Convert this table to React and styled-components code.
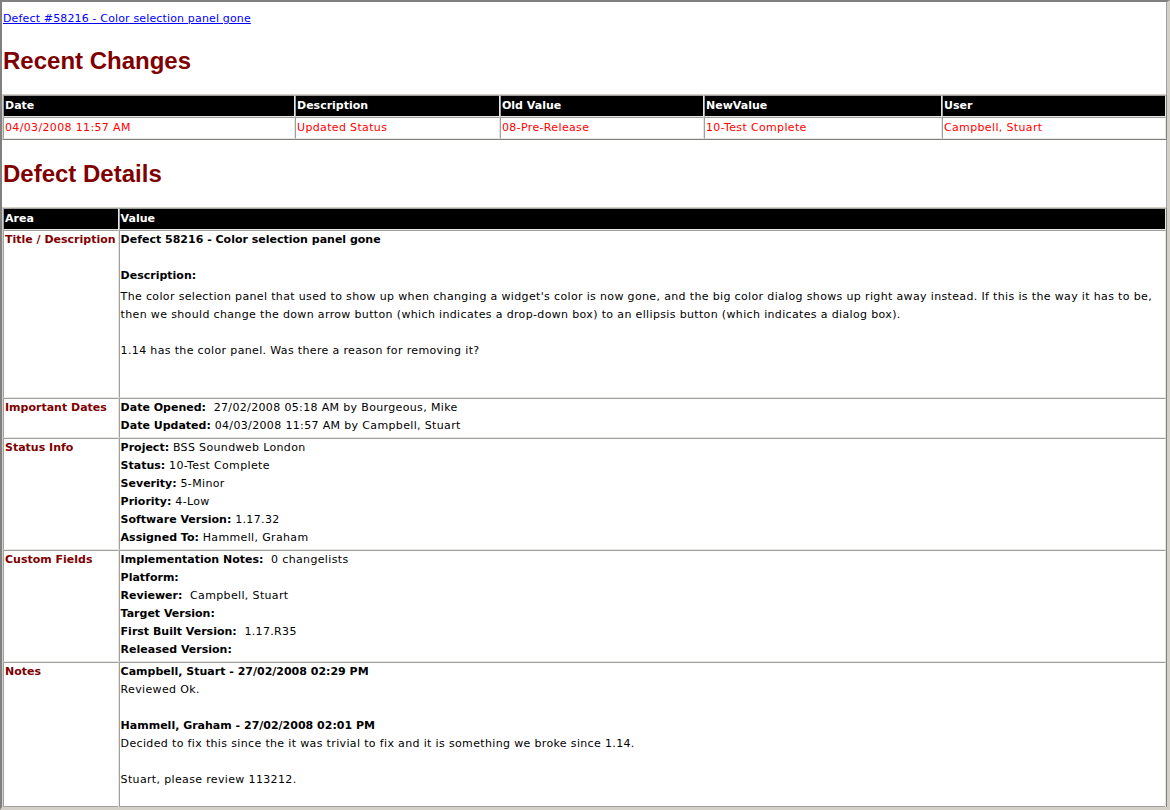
import React from 'react';
import styled, {createGlobalStyle} from 'styled-components';

const GlobalStyle = createGlobalStyle`
  html, body {
    margin: 0;
    padding: 0;
    background: #ffffff;
  }
`

const changes = [
    {date: '04/03/2008 11:57 AM', description: 'Updated Status', oldValue: '08-Pre-Release', newValue: '10-Test Complete', user: 'Campbell, Stuart'}
]

const changeColumns = [
    {key: 'date', title: 'Date', width: 287},
    {key: 'description', title: 'Description', width: 200},
    {key: 'oldValue', title: 'Old Value', width: 199},
    {key: 'newValue', title: 'NewValue', width: 233},
    {key: 'user', title: 'User'}
]

const statusInfo = [
    ['Project:', ' BSS Soundweb London'],
    ['Status:', ' 10-Test Complete'],
    ['Severity:', ' 5-Minor'],
    ['Priority:', ' 4-Low'],
    ['Software Version:', ' 1.17.32'],
    ['Assigned To:', ' Hammell, Graham']
]

const customFields = [
    ['Implementation Notes:', '\u00a0 0 changelists'],
    ['Platform:', ''],
    ['Reviewer:', '\u00a0 Campbell, Stuart'],
    ['Target Version:', ''],
    ['First Built Version:', '\u00a0 1.17.R35'],
    ['Released Version:', '']
]

const FieldLines = ({fields}) => (
    <>
        {fields.map(([label, value]) => (
            <Line key={label}><Label>{label}</Label>{value}</Line>
        ))}
    </>
)

const App = () => {
    return (
        <Frame>
            <GlobalStyle/>
            <TopLink href="#">Defect #58216 - Color selection panel gone</TopLink>

            <Heading>Recent Changes</Heading>
            <Table>
                <thead>
                <tr>
                    {changeColumns.map(col => (
                        <HeadCell key={col.key} style={col.width ? {width: col.width} : undefined}>{col.title}</HeadCell>
                    ))}
                </tr>
                </thead>
                <tbody>
                {changes.map((row, i) => (
                    <tr key={i}>
                        {changeColumns.map(col => (
                            <ChangeCell key={col.key}>{row[col.key]}</ChangeCell>
                        ))}
                    </tr>
                ))}
                </tbody>
            </Table>

            <Heading>Defect Details</Heading>
            <Table>
                <thead>
                <tr>
                    <HeadCell style={{width: 107}}>Area</HeadCell>
                    <HeadCell>Value</HeadCell>
                </tr>
                </thead>
                <tbody>
                <tr>
                    <AreaCell>Title / Description</AreaCell>
                    <ValueCell>
                        <Line><Label>Defect 58216 - Color selection panel gone</Label></Line>
                        <Blank/>
                        <Line><Label>Description:</Label></Line>
                        <Paragraph>
                            The color selection panel that used to show up when changing a widget's color is now gone, and the big color dialog shows up right away instead. If this is the way it has to be, then we should change the down arrow button (which indicates a drop-down box) to an ellipsis button (which indicates a dialog box).
                        </Paragraph>
                        <Blank/>
                        <Line>1.14 has the color panel. Was there a reason for removing it?</Line>
                        <Blank $tall/>
                    </ValueCell>
                </tr>
                <tr>
                    <AreaCell>Important Dates</AreaCell>
                    <ValueCell>
                        <Line><Label>Date Opened:</Label>{'\u00a0 27/02/2008 05:18 AM by Bourgeous, Mike'}</Line>
                        <Line><Label>Date Updated:</Label> 04/03/2008 11:57 AM by Campbell, Stuart</Line>
                    </ValueCell>
                </tr>
                <tr>
                    <AreaCell>Status Info</AreaCell>
                    <ValueCell><FieldLines fields={statusInfo}/></ValueCell>
                </tr>
                <tr>
                    <AreaCell>Custom Fields</AreaCell>
                    <ValueCell><FieldLines fields={customFields}/></ValueCell>
                </tr>
                <tr>
                    <AreaCell>Notes</AreaCell>
                    <ValueCell>
                        <Line><Label>Campbell, Stuart - 27/02/2008 02:29 PM</Label></Line>
                        <Line>Reviewed Ok.</Line>
                        <Blank/>
                        <Line><Label>Hammell, Graham - 27/02/2008 02:01 PM</Label></Line>
                        <Line>Decided to fix this since the it was trivial to fix and it is something we broke since 1.14.</Line>
                        <Blank/>
                        <Line>Stuart, please review 113212.</Line>
                        <Blank $tall/>
                    </ValueCell>
                </tr>
                </tbody>
            </Table>
        </Frame>
    );
};

const Frame = styled.div`
  box-sizing: border-box;
  height: 810px;
  overflow: hidden;
  border-top: 2px solid #808080;
  border-left: 2px solid #808080;
  border-right: 3px solid #d4d0c8;
  border-bottom: 3px solid #d4d0c8;
  box-shadow: inset -1px -1px 0 #a0a0a0;
  font-family: "DejaVu Sans", Verdana, sans-serif;
  font-size: 11px;
  letter-spacing: 0.35px;
  color: #000000;
`

const TopLink = styled.a`
  display: block;
  width: max-content;
  margin: 9px 0 0 1px;
  line-height: 16px;
  letter-spacing: 0.15px;
  color: #0000ff;
  text-decoration: underline;
`

const Heading = styled.h2`
  margin: 20px 0 19px 1px;
  font-family: "Liberation Sans", Arial, sans-serif;
  font-size: 24px;
  font-weight: bold;
  letter-spacing: 0;
  line-height: 28px;
  color: #800000;
`

const Table = styled.table`
  width: 100%;
  border-collapse: separate;
  border-spacing: 0;
  border: 1px solid;
  border-color: #d4d0c8 #808080 #808080 #d4d0c8;
  box-sizing: border-box;
`

const cellBase = `
  padding: 0 2px 0 1px;
  border: 1px solid;
  border-color: #a0a0a0 #e8e6e0 #e8e6e0 #a0a0a0;
  text-align: left;
  vertical-align: top;
  line-height: 18px;
`

const HeadCell = styled.th`
  ${cellBase}
  padding-top: 1px;
  padding-bottom: 1px;
  background: #000000;
  color: #ffffff;
  font-weight: bold;
  letter-spacing: 0;
`

const ChangeCell = styled.td`
  ${cellBase}
  padding-top: 1px;
  padding-bottom: 1px;
  color: #ff0000;
`

const AreaCell = styled.td`
  ${cellBase}
  padding-bottom: 2px;
  color: #800000;
  font-weight: bold;
  letter-spacing: 0;
  white-space: nowrap;
`

const ValueCell = styled.td`
  ${cellBase}
  padding-bottom: 2px;
`

const Line = styled.div`
  min-height: 18px;
  white-space: pre-wrap;
`

const Blank = styled.div`
  height: ${({$tall}) => $tall ? '35px' : '18px'};
`

const Label = styled.span`
  font-weight: bold;
  letter-spacing: 0;
`

const Paragraph = styled.div`
  margin-top: 3px;
`

export default App;
